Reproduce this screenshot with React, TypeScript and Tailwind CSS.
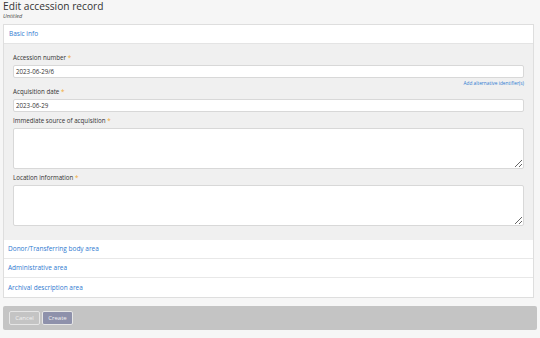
export default function App() {
  const font = { fontFamily: '"Open Sans", "Liberation Sans", sans-serif' };
  return (
    <div className="min-h-[338px] w-[540px] bg-[#f6f6f6] overflow-hidden text-[6px] leading-[8px]" style={font}>
      <div className="px-[3px]">
        <h1 className="text-[10.2px] leading-[12px] text-[#333] font-normal">Edit accession record</h1>
        <div className="text-[5.5px] italic text-[#444] leading-[6px] mt-[1px]">Untitled</div>

        <div className="mt-[5px] mr-[3px] border border-[#dedede] bg-white">
          <div className="h-[19px] flex items-center px-[5px] text-[6.5px] text-[#2f7ad0] border-b border-[#e4e4e4]">
            Basic info
          </div>
          <div className="bg-[#f0f0f0] px-[9px] pt-[11px] pb-[14px]">
            <Label text="Accession number" />
            <input
              readOnly
              value="2023-06-29/6"
              className="block w-full h-[13px] bg-white border border-[#d8d8d8] rounded-[2px] px-[2px] text-[6.2px] text-[#333] outline-none"
            />
            <div className="text-right text-[4.8px] text-[#2f7ad0] leading-[6px] mt-[2px]">Add alternative identifier(s)</div>
            <div className="mt-[3px]">
              <Label text="Acquisition date" />
            </div>
            <input
              readOnly
              value="2023-06-29"
              className="block w-full h-[13px] bg-white border border-[#d8d8d8] rounded-[2px] px-[2px] text-[6.2px] text-[#333] outline-none"
            />
            <div className="mt-[6px]">
              <Label text="Immediate source of acquisition" />
            </div>
            <textarea
              readOnly
              className="block w-full h-[41px] bg-white border border-[#d8d8d8] rounded-[2px] outline-none resize-y"
            />
            <div className="mt-[6px]">
              <Label text="Location information" />
            </div>
            <textarea
              readOnly
              className="block w-full h-[41px] bg-white border border-[#d8d8d8] rounded-[2px] outline-none resize-y"
            />
          </div>
          <Section text="Donor/Transferring body area" />
          <Section text="Administrative area" />
          <Section text="Archival description area" last />
        </div>

        <div className="mt-[8px] h-[24px] bg-[#c4c4c4] rounded-[2px] flex items-center gap-[2px] px-[6px]">
          <button className="h-[14px] w-[31px] border border-[#e6e6e6] rounded-[2px] bg-[#c4c4c4] text-[6px] text-[#f2f2f2]">
            Cancel
          </button>
          <button className="h-[14px] w-[31px] border border-[#e6e6e6] rounded-[2px] bg-[#8e91ab] text-[6px] text-[#f2f2f2]">
            Create
          </button>
        </div>
      </div>
    </div>
  );
}

function Label({ text }: { text: string }) {
  return (
    <div className="text-[6.2px] text-[#333] leading-[6px] mb-[4px]">
      {text} <span className="text-[#f0a830]">*</span>
    </div>
  );
}

function Section({ text, last }: { text: string; last?: boolean }) {
  return (
    <div
      className={
        "h-[19px] flex items-center px-[4px] text-[6.5px] text-[#2f7ad0] bg-white " +
        (last ? "" : "border-b border-[#e8e8e8]")
      }
    >
      {text}
    </div>
  );
}
